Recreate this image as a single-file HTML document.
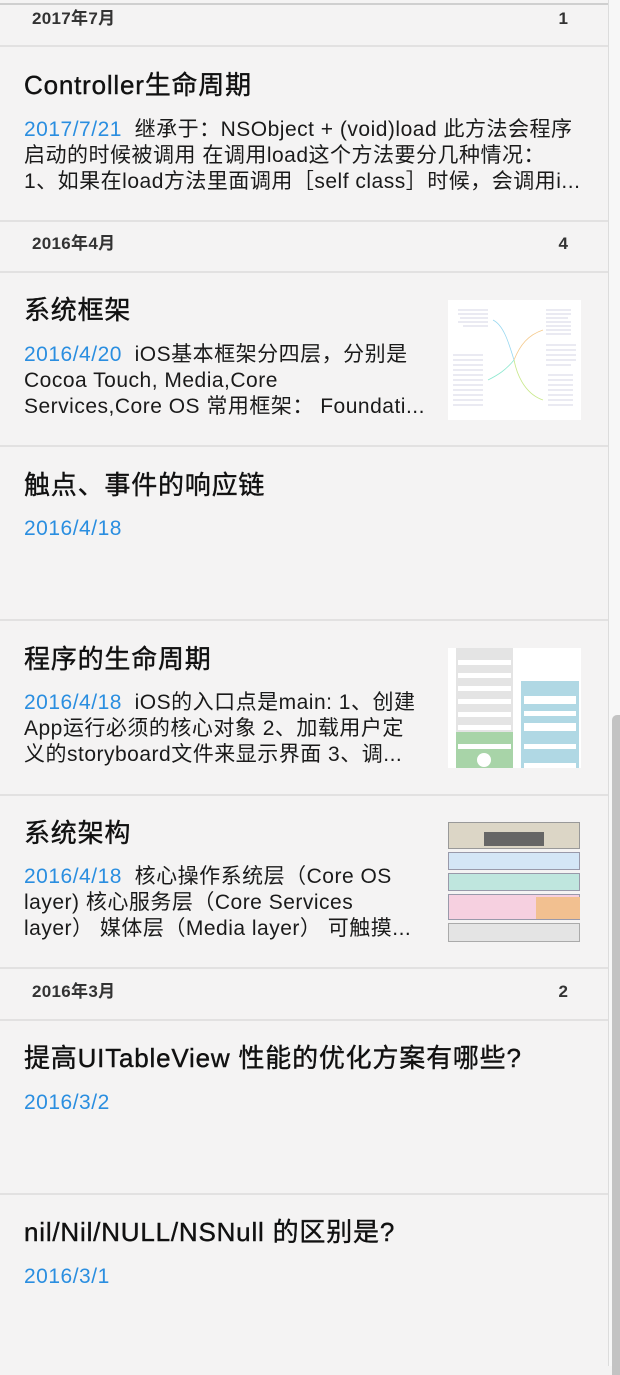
<!DOCTYPE html>
<html><head><meta charset="utf-8"><style>
*{margin:0;padding:0;box-sizing:border-box}
body{width:620px;height:1366px;background:#f4f3f3;position:relative;overflow:hidden;font-family:"Liberation Sans","Noto Sans CJK SC",sans-serif;color:#111}
.hl{position:absolute;left:0;width:608px;height:2px;background:#e2e1e1}
.vr{position:absolute;left:608px;top:0;width:1px;height:1366px;background:#dcdcdc}
.sb{position:absolute;left:609px;top:0;width:11px;height:1366px;background:#f7f7f7}
.thumb{position:absolute;left:612px;top:715px;width:8px;height:660px;background:#c3c3c3;border-radius:5px 0 0 0}
.hdr{position:absolute;left:32px;font-size:17px;font-weight:bold;color:#333;line-height:20px;letter-spacing:0.3px}
.cnt{position:absolute;left:520px;width:48px;text-align:right;font-size:17px;font-weight:bold;color:#333;line-height:20px}
.t{position:absolute;left:24px;font-size:26px;line-height:26px;color:#111;white-space:nowrap;letter-spacing:0.8px;-webkit-text-stroke:0.4px #111}
.b{position:absolute;left:24px;font-size:21px;line-height:26px;color:#1a1a1a;white-space:nowrap;letter-spacing:0.5px}
.d{color:#2a8ee0}
.img{position:absolute;left:448px;width:133px;height:120px;background:#fff;overflow:hidden}
</style></head><body>
<div class="sb"></div><div class="thumb"></div><div class="vr"></div>
<div style="position:absolute;left:0;top:3px;width:608px;height:2px;background:#cfcfcf"></div>

<div class="hdr" style="top:9px">2017年7月</div><div class="cnt" style="top:9px">1</div>
<div class="hl" style="top:45px"></div>
<div class="t" style="top:72px">Controller生命周期</div>
<div class="b" style="top:117px"><span class="d">2017/7/21</span>&nbsp; 继承于：NSObject + (void)load 此方法会程序<br>启动的时候被调用 在调用load这个方法要分几种情况：<br>1、如果在load方法里面调用［self class］时候，会调用i...</div>

<div class="hl" style="top:220px"></div>
<div class="hdr" style="top:234px">2016年4月</div><div class="cnt" style="top:234px">4</div>
<div class="hl" style="top:271px"></div>

<div class="t" style="top:297px">系统框架</div>
<div class="b" style="top:342px"><span class="d">2016/4/20</span>&nbsp; iOS基本框架分四层，分别是<br>Cocoa Touch, Media,Core<br>Services,Core OS 常用框架： Foundati...</div>
<div class="img" style="top:300px">
<svg width="133" height="120" viewBox="0 0 133 120" fill="none" stroke-width="0.8">
<path d="M66 60 C60 40 55 25 45 20" stroke="#9ad8f0"/><path d="M66 60 C72 45 80 35 95 30" stroke="#f5c98a"/><path d="M66 60 C70 80 80 95 95 100" stroke="#c8e88a"/><path d="M66 60 C58 70 50 75 40 80" stroke="#8fe8d0"/>
<g stroke="#aac" stroke-width="0.5"><path d="M10 10h30M10 14h30M12 18h28M10 22h30M15 26h25"/><path d="M98 10h25M98 14h25M98 18h22M98 22h25M98 26h25M98 30h25M98 34h25M98 45h30M98 50h30M98 55h30M98 60h30M98 65h25"/><path d="M5 55h30M5 60h30M5 65h30M5 70h30M5 75h30M5 80h30M5 85h30M5 90h30M5 95h30M5 100h30M5 105h30"/><path d="M100 75h25M100 80h25M100 85h25M100 90h25M100 95h25M100 100h25M100 105h25"/></g>
</svg></div>

<div class="hl" style="top:445px"></div>
<div class="t" style="top:472px">触点、事件的响应链</div>
<div class="b" style="top:516px"><span class="d">2016/4/18</span></div>

<div class="hl" style="top:619px"></div>
<div class="t" style="top:646px">程序的生命周期</div>
<div class="b" style="top:690px"><span class="d">2016/4/18</span>&nbsp; iOS的入口点是main: 1、创建<br>App运行必须的核心对象 2、加载用户定<br>义的storyboard文件来显示界面 3、调...</div>
<div class="img" style="top:648px">
<div style="position:absolute;left:8px;top:0;width:57px;height:84px;background:#e4e4e4"></div>
<div style="position:absolute;left:8px;top:84px;width:57px;height:36px;background:#a8d4a8"></div>
<div style="position:absolute;left:73px;top:33px;width:58px;height:87px;background:#b0d8e4"></div>
<div style="position:absolute;left:10px;top:12px;width:53px;height:5px;background:#fff"></div>
<div style="position:absolute;left:10px;top:25px;width:53px;height:5px;background:#fff"></div>
<div style="position:absolute;left:10px;top:38px;width:53px;height:5px;background:#fff"></div>
<div style="position:absolute;left:10px;top:51px;width:53px;height:5px;background:#fff"></div>
<div style="position:absolute;left:10px;top:64px;width:53px;height:5px;background:#fff"></div>
<div style="position:absolute;left:10px;top:77px;width:53px;height:5px;background:#fff"></div>
<div style="position:absolute;left:10px;top:96px;width:53px;height:5px;background:#fff"></div>
<div style="position:absolute;left:29px;top:105px;width:14px;height:14px;border-radius:50%;background:#fff"></div>
<div style="position:absolute;left:76px;top:48px;width:52px;height:8px;background:#fff"></div>
<div style="position:absolute;left:76px;top:63px;width:52px;height:5px;background:#fff"></div>
<div style="position:absolute;left:76px;top:75px;width:52px;height:8px;background:#fff"></div>
<div style="position:absolute;left:76px;top:96px;width:52px;height:5px;background:#fff"></div>
<div style="position:absolute;left:76px;top:115px;width:52px;height:5px;background:#fff"></div>
</div>

<div class="hl" style="top:794px"></div>
<div class="t" style="top:820px">系统架构</div>
<div class="b" style="top:864px"><span class="d">2016/4/18</span>&nbsp; 核心操作系统层（Core OS<br>layer) 核心服务层（Core Services<br>layer） 媒体层（Media layer） 可触摸...</div>
<div class="img" style="top:822px;background:#f4f3f3">
<div style="position:absolute;left:0;top:0;width:132px;height:27px;background:#dcd6c6;border:1px solid #999"></div>
<div style="position:absolute;left:36px;top:10px;width:60px;height:14px;background:#666"></div>
<div style="position:absolute;left:0;top:30px;width:132px;height:18px;background:#d4e6f6;border:1px solid #99a"></div>
<div style="position:absolute;left:0;top:51px;width:132px;height:18px;background:#bfe6de;border:1px solid #99a"></div>
<div style="position:absolute;left:0;top:72px;width:132px;height:26px;background:#f6d0e0;border:1px solid #99a"></div>
<div style="position:absolute;left:88px;top:75px;width:44px;height:22px;background:#f2c090"></div>
<div style="position:absolute;left:0;top:101px;width:132px;height:19px;background:#e4e4e4;border:1px solid #aaa"></div>
</div>

<div class="hl" style="top:967px"></div>
<div class="hdr" style="top:982px">2016年3月</div><div class="cnt" style="top:982px">2</div>
<div class="hl" style="top:1019px"></div>
<div class="t" style="top:1045px">提高UITableView 性能的优化方案有哪些?</div>
<div class="b" style="top:1090px"><span class="d">2016/3/2</span></div>

<div class="hl" style="top:1193px"></div>
<div class="t" style="top:1219px">nil/Nil/NULL/NSNull 的区别是?</div>
<div class="b" style="top:1264px"><span class="d">2016/3/1</span></div>
</body></html>
